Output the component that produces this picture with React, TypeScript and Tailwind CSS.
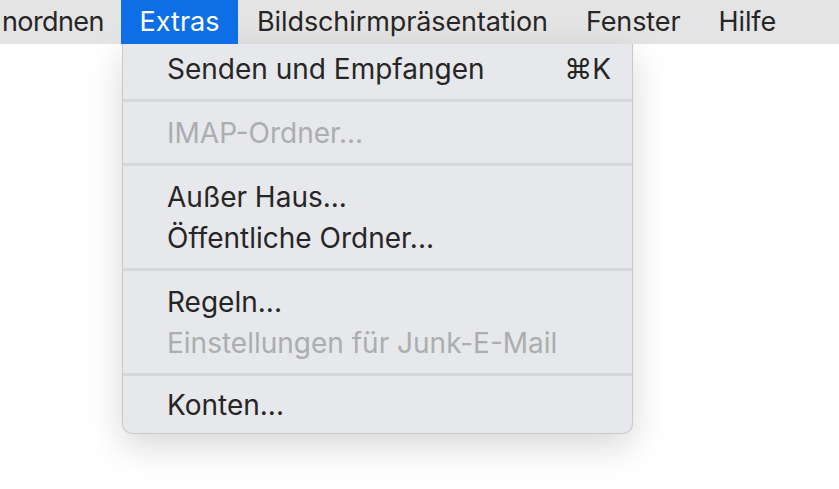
import React from 'react'

const menuBar = [
  { label: 'Bildschirmpräsentation' },
  { label: 'Fenster' },
  { label: 'Hilfe' },
]

type Item = { label: string; shortcut?: string; disabled?: boolean }

const groups: Item[][] = [
  [{ label: 'Senden und Empfangen', shortcut: '⌘K' }],
  [{ label: 'IMAP-Ordner...', disabled: true }],
  [{ label: 'Außer Haus...' }, { label: 'Öffentliche Ordner...' }],
  [{ label: 'Regeln...' }, { label: 'Einstellungen für Junk-E-Mail', disabled: true }],
  [{ label: 'Konten...' }],
]

export default function App() {
  return (
    <div
      className="w-[839px] h-[489px] bg-white overflow-hidden text-[#262626]"
      style={{ fontFamily: 'Inter, "DejaVu Sans", sans-serif' }}
    >
      {/* menu bar */}
      <div className="h-[44px] bg-[#e4e4e4] flex items-stretch text-[27px] whitespace-nowrap">
        <div className="w-[121px] flex items-center pl-[2px] tracking-[-0.6px]">
          nordnen
        </div>
        <div className="w-[117px] flex items-center justify-center bg-[#0d6ee6] text-white">
          Extras
        </div>
        {menuBar.map((m) => (
          <div key={m.label} className="flex items-center px-[19px] tracking-[-0.1px]">
            {m.label}
          </div>
        ))}
      </div>

      {/* dropdown */}
      <div className="ml-[122px] w-[511px] bg-[#e6e8eb] rounded-b-[10px] border-x border-b border-[#c6c8ca] shadow-[0_12px_36px_rgba(0,0,0,0.16)] pt-[4px] pb-[8px] text-[28px]">
        {groups.map((g, gi) => (
          <div key={gi}>
            {gi > 0 && (
              <div
                className={
                  gi === groups.length - 1
                    ? 'mt-[10px] mb-[8px] h-[3px] bg-[#d5d8db]'
                    : 'my-[10px] h-[3px] bg-[#d5d8db]'
                }
              />
            )}
            {g.map((it) => (
              <div
                key={it.label}
                className={
                  'h-[41px] flex items-center justify-between pl-[44px] pr-[21px] ' +
                  (it.disabled ? 'text-[#abadaf]' : 'text-[#262626]')
                }
              >
                <span>{it.label}</span>
                {it.shortcut && <span>{it.shortcut}</span>}
              </div>
            ))}
          </div>
        ))}
      </div>
    </div>
  )
}
